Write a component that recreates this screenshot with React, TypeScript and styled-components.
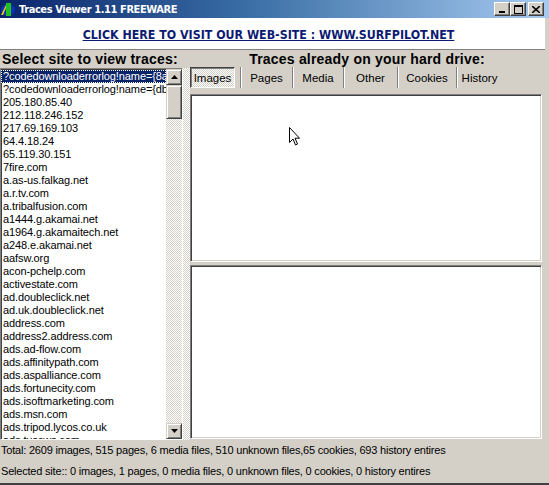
import React from "react";
import styled, {createGlobalStyle, css} from "styled-components";

const GlobalStyle = createGlobalStyle`
html, body {
  margin: 0;
  padding: 0;
  background: #d4d0c8;
}
body {
  font-family: "Liberation Sans", Arial, sans-serif;
  font-size: 11px;
  color: #000;
}
`

const Window = styled.div`
width: 549px;
height: 485px;
background: #d4d0c8;
display: flex;
flex-direction: column;
overflow: hidden;
box-sizing: border-box;
border-bottom: 2px solid #404040;
`

const TitleBar = styled.div`
height: 18px;
flex: none;
display: flex;
align-items: center;
background: linear-gradient(to right, #0a246a 0%, #3a6ea5 45%, #a6caf0 100%);
padding-right: 5px;
`

const TitleText = styled.span`
flex: 1;
margin-left: 3px;
color: #fff;
font-family: "DejaVu Sans Condensed", "DejaVu Sans", sans-serif;
font-weight: bold;
font-size: 11px;
letter-spacing: -0.4px;
`

const CaptionButton = styled.div<{ $gap?: number }>`
width: 16px;
height: 14px;
margin-left: ${p => p.$gap ?? 0}px;
box-sizing: border-box;
background: #d4d0c8;
border: 1px solid;
border-color: #fff #404040 #404040 #fff;
box-shadow: inset -1px -1px 0 #808080;
display: flex;
align-items: center;
justify-content: center;
`

const Banner = styled.div`
height: 31px;
flex: none;
background: #fff;
margin-right: 4px;
border-bottom: 1px solid #808080;
display: flex;
align-items: center;
justify-content: center;
`

const BannerLink = styled.a`
color: #0c1a72;
font-family: "DejaVu Sans Condensed", "DejaVu Sans", sans-serif;
font-weight: bold;
font-size: 12.3px;
text-decoration: underline;
margin-top: 3px;
margin-right: 8px;
`

const Main = styled.div`
display: flex;
height: 390px;
flex: none;
`

const LeftColumn = styled.div`
width: 183px;
display: flex;
flex-direction: column;
flex: none;
`

const Heading = styled.div<{ $center?: boolean }>`
font-weight: bold;
font-size: 14px;
height: ${p => (p.$center ? 17 : 18)}px;
line-height: 18px;
padding-left: 2px;
text-align: ${p => (p.$center ? "center" : "left")};
letter-spacing: 0.2px;
`

const ListBox = styled.div`
height: 372px;
box-sizing: border-box;
border: 1px solid;
border-color: #808080 #fff #fff #808080;
box-shadow: inset 1px 1px 0 #404040;
background: #fff;
display: flex;
overflow: hidden;
`

const ListItems = styled.div`
flex: 1;
padding-top: 1px;
overflow: hidden;
`

const Item = styled.div<{ $selected?: boolean }>`
height: 13px;
line-height: 13px;
padding-left: 2px;
white-space: nowrap;
overflow: hidden;
font-size: 11px;
letter-spacing: -0.1px;
${p => p.$selected && css`
  background: #0a246a;
  color: #fff;
  outline: 1px dotted #fff;
  outline-offset: -1px;
`}
`

const checker = css`
background-color: #fff;
background-image: linear-gradient(45deg, #d4d0c8 25%, transparent 25%, transparent 75%, #d4d0c8 75%),
  linear-gradient(45deg, #d4d0c8 25%, transparent 25%, transparent 75%, #d4d0c8 75%);
background-size: 2px 2px;
background-position: 0 0, 1px 1px;
`

const ScrollBar = styled.div`
width: 16px;
flex: none;
display: flex;
flex-direction: column;
${checker}
`

const ScrollButton = styled.div<{ $height?: number }>`
height: ${p => p.$height ?? 16}px;
box-sizing: border-box;
background: #d4d0c8;
border: 1px solid;
border-color: #d4d0c8 #404040 #404040 #d4d0c8;
box-shadow: inset 1px 1px 0 #fff, inset -1px -1px 0 #808080;
display: flex;
align-items: center;
justify-content: center;
`

const Spacer = styled.div`
flex: 1;
`

const Splitter = styled.div`
width: 7px;
flex: none;
margin-top: 18px;
${checker}
`

const RightColumn = styled.div`
flex: 1;
display: flex;
flex-direction: column;
padding-right: 7px;
`

const Tabs = styled.div`
display: flex;
align-items: stretch;
height: 21px;
margin-bottom: 6px;
`

const Tab = styled.div<{ $active?: boolean; $width: number }>`
width: ${p => p.$width}px;
box-sizing: border-box;
display: flex;
align-items: center;
justify-content: center;
font-size: 11.5px;
color: #000;
border-left: 1px solid #808080;
box-shadow: inset 1px 0 0 #fff;
${p => p.$active && css`
  margin-right: 5px;
  border: 1px solid;
  border-color: #404040 #fff #fff #404040;
  box-shadow: inset 1px 1px 0 #808080;
  ${checker}
`}
`

const Panel = styled.div<{ $height: number; $gap?: number }>`
height: ${p => p.$height}px;
margin-top: ${p => p.$gap ?? 0}px;
box-sizing: border-box;
background: #fff;
border: 1px solid;
border-color: #808080 #fff #fff #808080;
box-shadow: inset 1px 1px 0 #404040, inset -1px -1px 0 #d4d0c8;
position: relative;
`

const Cursor = styled.svg`
position: absolute;
left: 98px;
top: 32px;
`

const Status = styled.div`
height: 21px;
line-height: 21px;
padding-left: 1px;
font-size: 11px;
letter-spacing: -0.2px;
white-space: nowrap;
`

const sites = [
    "?codedownloaderrorlog!name={8a",
    "?codedownloaderrorlog!name={db",
    "205.180.85.40",
    "212.118.246.152",
    "217.69.169.103",
    "64.4.18.24",
    "65.119.30.151",
    "7fire.com",
    "a.as-us.falkag.net",
    "a.r.tv.com",
    "a.tribalfusion.com",
    "a1444.g.akamai.net",
    "a1964.g.akamaitech.net",
    "a248.e.akamai.net",
    "aafsw.org",
    "acon-pchelp.com",
    "activestate.com",
    "ad.doubleclick.net",
    "ad.uk.doubleclick.net",
    "address.com",
    "address2.address.com",
    "ads.ad-flow.com",
    "ads.affinitypath.com",
    "ads.aspalliance.com",
    "ads.fortunecity.com",
    "ads.isoftmarketing.com",
    "ads.msn.com",
    "ads.tripod.lycos.co.uk",
    "ads.tuscws.com",
]

const tabs = [
    {label: "Images", width: 45},
    {label: "Pages", width: 52},
    {label: "Media", width: 51},
    {label: "Other", width: 54},
    {label: "Cookies", width: 59},
    {label: "History", width: 46},
]

function AppIcon() {
    return (
        <svg width="16" height="16" viewBox="0 0 16 16">
            <ellipse cx="8" cy="9" rx="7" ry="6" fill="#1030c0"/>
            <rect x="6" y="2" width="5" height="13" fill="#20c020"/>
            <path d="M1 14 L6 4 L6 7 L3 14 Z" fill="#f0d000"/>
        </svg>
    )
}

export default function App() {
    return (
        <>
            <GlobalStyle/>
            <Window>
                <TitleBar>
                    <AppIcon/>
                    <TitleText>Traces Viewer 1.11 FREEWARE</TitleText>
                    <CaptionButton>
                        <svg width="8" height="7"><rect x="1" y="5" width="6" height="2" fill="#000"/></svg>
                    </CaptionButton>
                    <CaptionButton>
                        <svg width="9" height="9"><rect x="0.5" y="0.5" width="8" height="8" fill="none" stroke="#000"/><rect x="0" y="0" width="9" height="2" fill="#000"/></svg>
                    </CaptionButton>
                    <CaptionButton $gap={2}>
                        <svg width="8" height="7" viewBox="0 0 8 7"><path d="M0 0 L8 7 M8 0 L0 7" stroke="#000" strokeWidth="1.6"/></svg>
                    </CaptionButton>
                </TitleBar>
                <Banner>
                    <BannerLink>CLICK HERE TO VISIT OUR WEB-SITE : WWW.SURFPILOT.NET</BannerLink>
                </Banner>
                <Main>
                    <LeftColumn>
                        <Heading>Select site to view traces:</Heading>
                        <ListBox>
                            <ListItems>
                                {sites.map((s, i) => (
                                    <Item key={s} $selected={i === 0}>{s}</Item>
                                ))}
                            </ListItems>
                            <ScrollBar>
                                <ScrollButton>
                                    <svg width="7" height="4"><path d="M3.5 0 L7 4 L0 4 Z" fill="#000"/></svg>
                                </ScrollButton>
                                <ScrollButton $height={34}/>
                                <Spacer/>
                                <ScrollButton>
                                    <svg width="7" height="4"><path d="M0 0 L7 0 L3.5 4 Z" fill="#000"/></svg>
                                </ScrollButton>
                            </ScrollBar>
                        </ListBox>
                    </LeftColumn>
                    <Splitter/>
                    <RightColumn>
                        <Heading $center>Traces already on your hard drive:</Heading>
                        <Tabs>
                            {tabs.map((t, i) => (
                                <Tab key={t.label} $active={i === 0} $width={t.width}>{t.label}</Tab>
                            ))}
                        </Tabs>
                        <Panel $height={168}>
                            <Cursor width="12" height="19" viewBox="0 0 12 19">
                                <path d="M0.5 0.5 L0.5 15.5 L4 12 L6.5 18 L8.5 17 L6 11.2 L10.5 11.2 Z"
                                      fill="#fff" stroke="#000" strokeWidth="1"/>
                            </Cursor>
                        </Panel>
                        <Panel $height={174} $gap={3}/>
                    </RightColumn>
                </Main>
                <Status>Total: 2609 images, 515 pages, 6 media files, 510 unknown files,65 cookies, 693 history entires</Status>
                <Status>Selected site:: 0 images, 1 pages, 0 media files, 0 unknown files, 0 cookies, 0 history entires</Status>
            </Window>
        </>
    )
}
